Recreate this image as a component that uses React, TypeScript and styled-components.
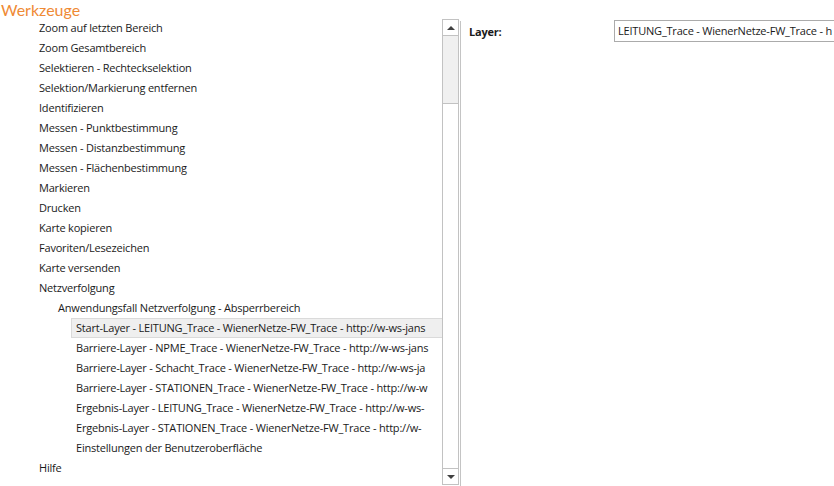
import React from "react";
import styled, { createGlobalStyle } from "styled-components";

const Global = createGlobalStyle`
  html, body { margin: 0; padding: 0; background: #fff; }
  body { font-family: "Open Sans", "Noto Sans", sans-serif; font-size: 11px; letter-spacing: -0.2px; color: #1a1a1a; overflow: hidden; }
  * { box-sizing: border-box; }
`;

const Page = styled.div`
  width: 834px;
  height: 486px;
  display: flex;
  flex-direction: column;
  overflow: hidden;
`;

const Title = styled.div`
  height: 19px;
  line-height: 19px;
  padding-left: 1px;
  font-family: Lato, "Open Sans", sans-serif;
  letter-spacing: 0;
  font-size: 16px;
  color: #ef8a35;
  white-space: nowrap;
`;

const Body = styled.div`
  flex: 1;
  display: flex;
  min-height: 0;
`;

const LeftPanel = styled.div`
  width: 461px;
  display: flex;
  border-right: 1px solid #c4c4c4;
  margin-top: 2px;
  padding-right: 1px;
`;

const List = styled.div`
  width: 442px;
  margin-top: -3px;
  display: flex;
  flex-direction: column;
  overflow: hidden;
`;

const Row = styled.div<{ $level: number; $selected?: boolean }>`
  height: 20px;
  line-height: 18px;
  white-space: nowrap;
  overflow: hidden;
  margin-left: ${(p) => (p.$level === 1 ? 37 : p.$level === 2 ? 56 : 71)}px;
  padding-left: ${(p) => (p.$level === 3 ? 4 : 1)}px;
  border: 1px solid ${(p) => (p.$selected ? "#dadada" : "transparent")};
  border-right: none;
  background: ${(p) => (p.$selected ? "#efefef" : "transparent")};
`;

const Scrollbar = styled.div`
  width: 17px;
  display: flex;
  flex-direction: column;
  margin-top: -2px;
  margin-bottom: 1px;
`;

const ScrollButton = styled.div`
  height: 17px;
  border: 1px solid #c2c2c2;
  background: #fff;
  display: flex;
  align-items: center;
  justify-content: center;
`;

const Track = styled.div`
  height: 67px;
  background: #f0f0f0;
  border-left: 1px solid #c2c2c2;
  border-right: 1px solid #c2c2c2;
`;

const Thumb = styled.div`
  flex: 1;
  background: #fff;
  border: 1px solid #c2c2c2;
  border-bottom: none;
`;

const Arrow = styled.div<{ $down?: boolean }>`
  width: 0;
  height: 0;
  border-left: 4px solid transparent;
  border-right: 4px solid transparent;
  ${(p) =>
    p.$down
      ? "border-top: 4px solid #404040;"
      : "border-bottom: 4px solid #404040;"}
`;

const RightPanel = styled.div`
  flex: 1;
  display: flex;
  align-items: flex-start;
  padding-top: 1px;
  padding-left: 8px;
  min-width: 0;
`;

const Label = styled.div`
  width: 145px;
  font-weight: bold;
  line-height: 21px;
  padding-top: 1px;
`;

const Field = styled.div`
  flex: 1;
  height: 22px;
  border: 1px solid #ababab;
  border-right: none;
  line-height: 20px;
  padding-left: 3px;
  white-space: nowrap;
  overflow: hidden;
`;

type Item = { text: string; level: number; selected?: boolean };

const items: Item[] = [
  { text: "Zoom auf letzten Bereich", level: 1 },
  { text: "Zoom Gesamtbereich", level: 1 },
  { text: "Selektieren - Rechteckselektion", level: 1 },
  { text: "Selektion/Markierung entfernen", level: 1 },
  { text: "Identifizieren", level: 1 },
  { text: "Messen - Punktbestimmung", level: 1 },
  { text: "Messen - Distanzbestimmung", level: 1 },
  { text: "Messen - Flächenbestimmung", level: 1 },
  { text: "Markieren", level: 1 },
  { text: "Drucken", level: 1 },
  { text: "Karte kopieren", level: 1 },
  { text: "Favoriten/Lesezeichen", level: 1 },
  { text: "Karte versenden", level: 1 },
  { text: "Netzverfolgung", level: 1 },
  { text: "Anwendungsfall Netzverfolgung - Absperrbereich", level: 2 },
  { text: "Start-Layer - LEITUNG_Trace - WienerNetze-FW_Trace - http://w-ws-jans", level: 3, selected: true },
  { text: "Barriere-Layer - NPME_Trace - WienerNetze-FW_Trace - http://w-ws-jans", level: 3 },
  { text: "Barriere-Layer - Schacht_Trace - WienerNetze-FW_Trace - http://w-ws-ja", level: 3 },
  { text: "Barriere-Layer - STATIONEN_Trace - WienerNetze-FW_Trace - http://w-w", level: 3 },
  { text: "Ergebnis-Layer - LEITUNG_Trace - WienerNetze-FW_Trace - http://w-ws-", level: 3 },
  { text: "Ergebnis-Layer - STATIONEN_Trace - WienerNetze-FW_Trace - http://w-", level: 3 },
  { text: "Einstellungen der Benutzeroberfläche", level: 3 },
  { text: "Hilfe", level: 1 },
];

export default function App() {
  return (
    <Page>
      <Global />
      <Title>Werkzeuge</Title>
      <Body>
        <LeftPanel>
          <List>
            {items.map((it, i) => (
              <Row key={i} $level={it.level} $selected={it.selected}>
                {it.text}
              </Row>
            ))}
          </List>
          <Scrollbar>
            <ScrollButton>
              <Arrow />
            </ScrollButton>
            <Track />
            <Thumb />
            <ScrollButton>
              <Arrow $down />
            </ScrollButton>
          </Scrollbar>
        </LeftPanel>
        <RightPanel>
          <Label>Layer:</Label>
          <Field>LEITUNG_Trace - WienerNetze-FW_Trace - h</Field>
        </RightPanel>
      </Body>
    </Page>
  );
}
